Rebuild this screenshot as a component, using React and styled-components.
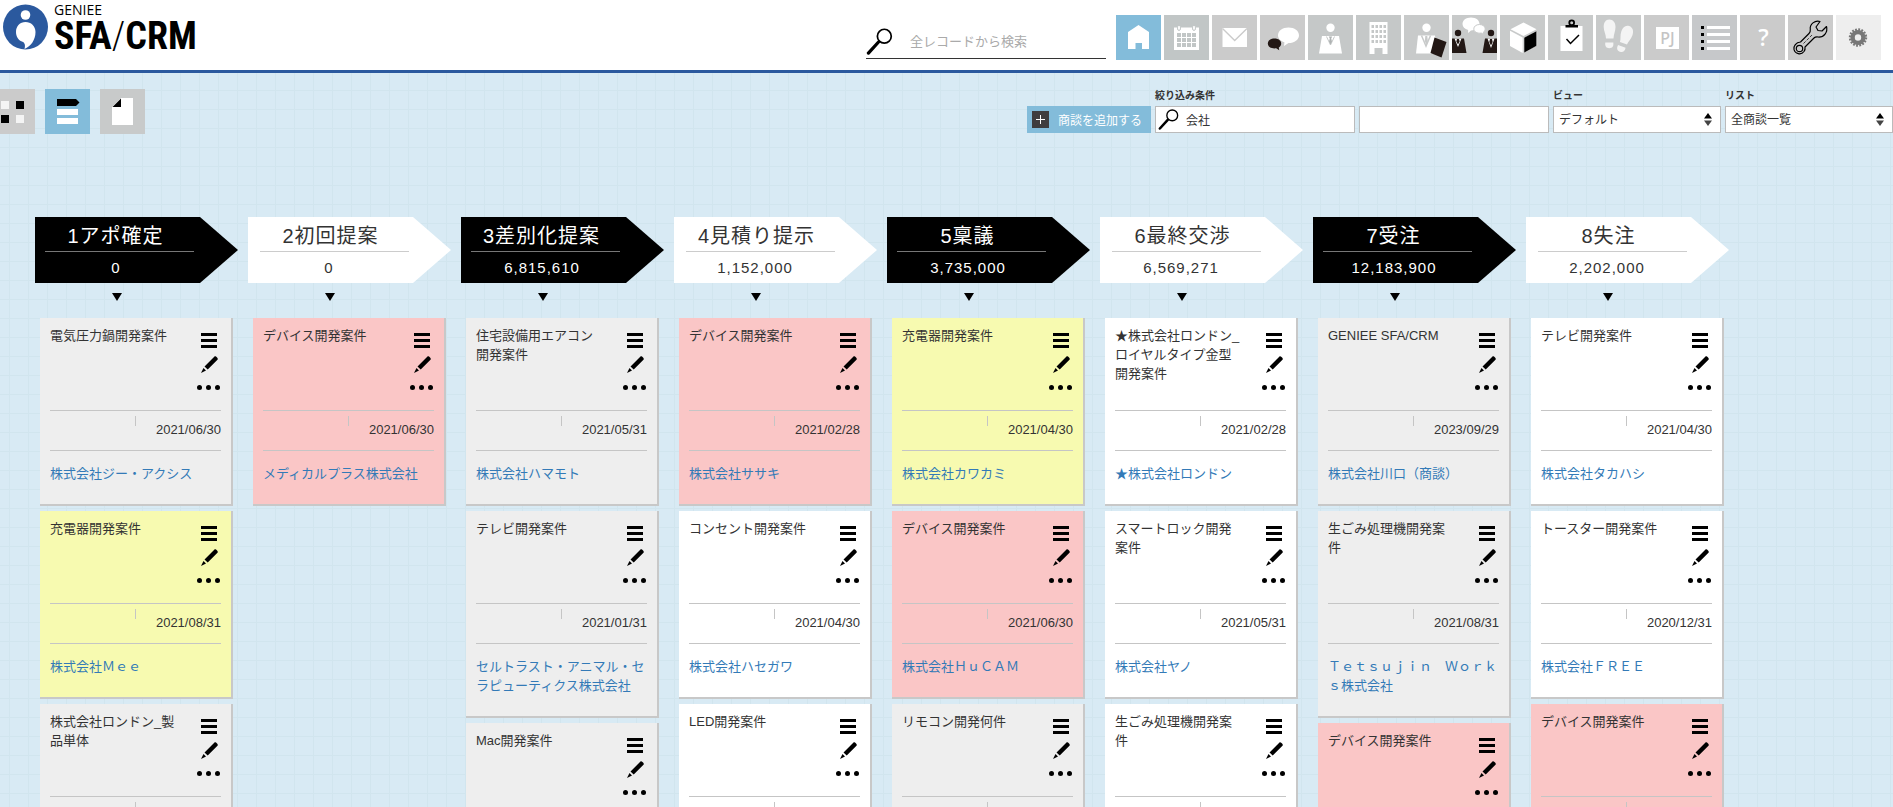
import React from 'react'
import styled, { createGlobalStyle } from 'styled-components';

const GlobalStyle = createGlobalStyle`
* {
  box-sizing: border-box;
}
body {
  margin: 0;
  font-family: "Liberation Sans", "Noto Sans CJK JP", sans-serif;
  font-size: 13px;
  line-height: 19px;
  color: #333;
}
button, input, select {
  font-family: inherit;
  color: inherit;
}
`

const stages = [
  {
    name: "1アポ確定", total: "0", cards: [
      { title: "電気圧力鍋開発案件", date: "2021/06/30", company: "株式会社ジー・アクシス", tone: "gray" },
      { title: "充電器開発案件", date: "2021/08/31", company: "株式会社Ｍｅｅ", tone: "yellow" },
      { title: "株式会社ロンドン_製品単体", date: "2021/08/31", company: "株式会社ロンドン", tone: "gray" },
    ]
  },
  {
    name: "2初回提案", total: "0", cards: [
      { title: "デバイス開発案件", date: "2021/06/30", company: "メディカルプラス株式会社", tone: "pink" },
    ]
  },
  {
    name: "3差別化提案", total: "6,815,610", cards: [
      { title: "住宅設備用エアコン開発案件", date: "2021/05/31", company: "株式会社ハマモト", tone: "gray" },
      { title: "テレビ開発案件", date: "2021/01/31", company: "セルトラスト・アニマル・セラピューティクス株式会社", tone: "gray" },
      { title: "Mac開発案件", date: "2021/03/31", company: "株式会社ハマモト", tone: "gray" },
    ]
  },
  {
    name: "4見積り提示", total: "1,152,000", cards: [
      { title: "デバイス開発案件", date: "2021/02/28", company: "株式会社ササキ", tone: "pink" },
      { title: "コンセント開発案件", date: "2021/04/30", company: "株式会社ハセガワ", tone: "white" },
      { title: "LED開発案件", date: "2021/04/30", company: "株式会社ササキ", tone: "white" },
    ]
  },
  {
    name: "5稟議", total: "3,735,000", cards: [
      { title: "充電器開発案件", date: "2021/04/30", company: "株式会社カワカミ", tone: "yellow" },
      { title: "デバイス開発案件", date: "2021/06/30", company: "株式会社ＨｕＣＡＭ", tone: "pink" },
      { title: "リモコン開発何件", date: "2021/06/30", company: "株式会社カワカミ", tone: "gray" },
    ]
  },
  {
    name: "6最終交渉", total: "6,569,271", cards: [
      { title: "★株式会社ロンドン_ロイヤルタイプ金型開発案件", date: "2021/02/28", company: "★株式会社ロンドン", tone: "white" },
      { title: "スマートロック開発案件", date: "2021/05/31", company: "株式会社ヤノ", tone: "white" },
      { title: "生ごみ処理機開発案件", date: "2021/05/31", company: "株式会社ヤノ", tone: "white" },
    ]
  },
  {
    name: "7受注", total: "12,183,900", cards: [
      { title: "GENIEE SFA/CRM", date: "2023/09/29", company: "株式会社川口（商談）", tone: "gray" },
      { title: "生ごみ処理機開発案件", date: "2021/08/31", company: "Ｔｅｔｓｕｊｉｎ　Ｗｏｒｋｓ株式会社", tone: "gray" },
      { title: "デバイス開発案件", date: "2021/08/31", company: "株式会社タカハシ", tone: "pink" },
    ]
  },
  {
    name: "8失注", total: "2,202,000", cards: [
      { title: "テレビ開発案件", date: "2021/04/30", company: "株式会社タカハシ", tone: "white" },
      { title: "トースター開発案件", date: "2020/12/31", company: "株式会社ＦＲＥＥ", tone: "white" },
      { title: "デバイス開発案件", date: "2020/12/31", company: "株式会社タカハシ", tone: "pink" },
    ]
  },
];

const tones = {
  gray: "#eeeeee",
  yellow: "#f7fab0",
  pink: "#fac6c6",
  white: "#ffffff"
};

const Page = styled.div`
  display: flex;
  flex-direction: column;
  height: 100vh;
  overflow: hidden;
  background-color: #d8eaf4;
  background-image:
    linear-gradient(to right, #d1e5ee 1px, transparent 1px),
    linear-gradient(to bottom, #d1e5ee 1px, transparent 1px);
  background-size: 19px 19px;
  background-position: 9px 14px;
`

/* header */
const Header = styled.header`
  display: flex;
  flex-shrink: 0;
  align-items: flex-start;
  height: 73px;
  padding-right: 12px;
  background: #fff;
  border-bottom: 3px solid #2b599e;
`
const Logo = styled.a`
  display: flex;
  gap: 6px;
  margin: 4px auto 0 3px;
  color: #000;
  text-decoration: none;
`
const LogoText = styled.span`
  display: flex;
  flex-direction: column;
`
const LogoSmall = styled.span`
  font: 14px/12px "Open Sans", sans-serif;
`
const LogoBig = styled.span`
  font: bold 38px/40px "Roboto Condensed", "Liberation Sans Narrow", "Liberation Sans", sans-serif;
`
const Slash = styled.span`
  font-weight: 300;
`
const Search = styled.label`
  display: flex;
  align-items: center;
  width: 240px;
  height: 35px;
  margin: 24px 10px 0 0;
  border-bottom: 1px solid #333;
  input {
    flex: 1;
    min-width: 0;
    margin-left: 17px;
    padding: 0;
    border: 0;
    outline: 0;
    background: none;
    font-size: 13px;
  }
  input::placeholder {
    color: #aaa;
  }
`
const Nav = styled.nav`
  display: flex;
  gap: 3px;
  padding-top: 15px;
`
const IconButton = styled.button`
  flex-shrink: 0;
  width: 45px;
  height: 45px;
  padding: 0;
  border: 0;
  background: ${p => p.$bg || "#c8caca"};
  cursor: pointer;
  svg {
    display: block;
  }
`

/* toolbar */
const Toolbar = styled.div`
  display: flex;
  flex-shrink: 0;
  justify-content: space-between;
  align-items: flex-start;
  padding-top: 16px;
`
const Views = styled.div`
  display: flex;
  gap: 10px;
  margin-left: -10px;
`
const Filters = styled.div`
  display: flex;
  align-items: flex-end;
  gap: 4px;
`
const AddButton = styled.button`
  display: flex;
  align-items: center;
  gap: 9px;
  width: 124px;
  height: 27px;
  padding: 0 5px;
  border: 0;
  background: #83bcda;
  color: #fff;
  font-size: 12px;
  white-space: nowrap;
  svg {
    flex-shrink: 0;
  }
`
const Field = styled.label`
  display: flex;
  flex-direction: column;
  width: ${p => p.$width};
  font-size: 10px;
  font-weight: bold;
  line-height: 14px;
`
const Box = styled.span`
  display: grid;
  grid-template-columns: ${p => p.$columns || "1fr"};
  align-items: center;
  height: 27px;
  margin-top: 3px;
  border: 1px solid #bbb;
  background: #fff;
  input, select {
    width: 100%;
    min-width: 0;
    height: 25px;
    padding: 0 5px;
    border: 0;
    outline: 0;
    background: none;
    font-size: 12px;
    appearance: none;
  }
  select {
    grid-row: 1;
    grid-column: 1 / 3;
  }
  > svg {
    margin-left: 2px;
  }
`
const Spinner = styled.svg`
  grid-row: 1;
  grid-column: 2;
  pointer-events: none;
`

/* board */
const Board = styled.main`
  display: flex;
  flex: 1;
  min-height: 0;
  margin-top: 83px;
  padding-left: 35px;
  overflow: auto;
  scrollbar-width: none;
`
const Column = styled.section`
  flex: 0 0 213px;
`
const StageHead = styled.header`
  width: 203px;
  height: 66px;
  padding: 5px 41px 0 0;
  clip-path: polygon(0 0, 165px 0, 100% 50%, 165px 100%, 0 100%);
  background: ${p => p.$dark ? "#000" : "#fff"};
  color: ${p => p.$dark ? "#fff" : "#333"};
  text-align: center;
  letter-spacing: 1px;
`
const StageName = styled.h2`
  margin: 0 ${p => p.$dark ? "3px 0 10px" : "1px 0 12px"};
  padding: 0 8px 1px 0;
  border-bottom: 1px solid ${p => p.$dark ? "#777" : "#ccc"};
  font-size: 20px;
  font-weight: normal;
  line-height: 28px;
`
const StageTotal = styled.p`
  margin: 5px 0 0;
  font-size: 15px;
  line-height: 22px;
`
const Arrow = styled.div`
  width: 0;
  margin: 10px 0 17px 77px;
  border: 5px solid transparent;
  border-top: 8px solid #000;
  border-bottom: 0;
`
const Card = styled.article`
  width: 193px;
  margin: 0 0 5px 5px;
  padding: 0 10px;
  border: solid #c8c8c8;
  border-width: 0 2px 2px 0;
  background: ${p => tones[p.$tone]};
`
const CardTop = styled.div`
  display: flex;
  justify-content: space-between;
  height: 92px;
`
const CardTitle = styled.h3`
  width: 128px;
  margin: 8px 0 0;
  font-size: 13px;
  font-weight: normal;
  line-height: 19px;
`
const Actions = styled.div`
  display: flex;
  flex-direction: column;
  align-items: flex-end;
  padding-top: 13px;
  button {
    width: 24px;
    height: 23px;
    padding: 0;
    border: 0;
    background: none;
    cursor: pointer;
  }
  svg {
    display: block;
  }
`
const DateRow = styled.div`
  display: flex;
  justify-content: space-between;
  height: 41px;
  border: solid #c5c5c5;
  border-width: 1px 0;
  padding-top: 5px;
`
const Tick = styled.span`
  width: 1px;
  height: 10px;
  margin-left: 85px;
  background: #c5c5c5;
`
const DueDate = styled.time`
  padding-top: 4px;
`
const Company = styled.a`
  display: block;
  padding: 13px 0 21px;
  color: #337ab7;
  text-decoration: none;
`

const Icon = ({ children, size = 45 }) =>
  <svg width={size} height={size} viewBox={`0 0 ${size} ${size}`} aria-hidden="true">{children}</svg>;

const Magnifier = ({ size }) =>
  <svg width={size} height={size} viewBox="0 0 27 28" aria-hidden="true">
    <circle cx="18.5" cy="8.5" r="7.2" fill="#fff" stroke="#000" strokeWidth="1.8" />
    <path d="M2 26 L12.5 14.5" stroke="#000" strokeWidth="3.4" strokeLinecap="round" />
  </svg>;

const windows = [0, 1, 2, 3].flatMap(r => [0, 1, 2, 3].map(c => [16 + c * 4, 10 + r * 5]));
const days = [0, 1, 2].flatMap(r => [0, 1, 2, 3].map(c => [12 + c * 5, 18 + r * 5]));

const navItems = [
  {
    label: "ホーム", bg: "#83bcda",
    icon: <path d="M12 17 L22.5 10 L33 17 V34 H26 V28 H19.5 V34 H12 Z" fill="#fff" />
  },
  {
    label: "カレンダー", bg: "#c1c6c6",
    icon: <>
      <path d="M10 12.5 H35 V35 H10 Z" fill="#fff" />
      {days.map(([x, y]) => <rect key={x + "-" + y} x={x + 1} y={y} width="4" height="4" fill="#c1c6c6" />)}
      <rect x="13.6" y="10.4" width="2.8" height="5" rx="1.4" fill="#fff" stroke="#c1c6c6" />
      <rect x="28.6" y="10.4" width="2.8" height="5" rx="1.4" fill="#fff" stroke="#c1c6c6" />
    </>
  },
  {
    label: "メール", bg: "#cbcbcb",
    icon: <>
      <rect x="10.5" y="13" width="24.5" height="19" fill="#fff" />
      <path d="M10.5 13.5 L22.7 25.5 L35 13.5" fill="none" stroke="#cbcbcb" strokeWidth="1.4" />
    </>
  },
  {
    label: "チャット", bg: "#cbcbcb",
    icon: <>
      <path d="M28.5 12.5 c6 0 10.5 3.3 10.5 7.8 s-4.5 7.8 -10.5 7.8 l-4.5 3 .4 -3.9 c-4 -1 -6.4 -3.8 -6.4 -6.9 c0 -4.5 4.5 -7.8 10.5 -7.8 z" fill="#fff" />
      <path d="M14.5 23.5 c4 0 6.7 2.2 6.7 5 c0 1.8 -.9 3.2 -2.4 4 l.4 2.7 l-3 -1.9 c-5 .7 -8.4 -1.6 -8.4 -4.8 c0 -2.8 2.7 -5 6.7 -5 z" fill="#231815" />
    </>
  },
  {
    label: "担当者", bg: "#c5c8c8",
    icon: <>
      <circle cx="22.5" cy="12.8" r="4.2" fill="#fff" />
      <path d="M14 21 H31 L34 38.5 H11 Z" fill="#fff" />
      <path d="M18.5 21.5 L22.5 30 L26.5 21.5" fill="none" stroke="#c5c8c8" />
      <path d="M20.8 21.5 h3.4 l-1 2 l.8 3 l-1.5 3 l-1.500 -3 l.8 -3 z" fill="#aeb2b2" />
    </>
  },
  {
    label: "会社", bg: "#c5c8c8",
    icon: <>
      <rect x="13.5" y="7" width="18" height="32" fill="#fff" />
      {windows.map(([x, y]) => <rect key={x + "-" + y} x={x - .5} y={y} width="2.5" height="3" fill="#c5c8c8" />)}
      <rect x="18.5" y="33" width="8" height="6" fill="#c5c8c8" />
    </>
  },
  {
    label: "商談",
    icon: <>
      <circle cx="22.5" cy="12.7" r="4.2" fill="#fff" />
      <path d="M14 20.5 H31 L33.5 38.5 H12 Z" fill="#fff" />
      <path d="M17.5 20.5 L22 31 L26.5 20.5" fill="none" stroke="#c8caca" strokeWidth="1.5" />
      <path d="M21.3 21 h2 l.5 5 l-1.5 4 l-1.5 -4 z" fill="#c8caca" />
      <path d="M30.5 22.5 L42.5 27 L37.5 42.5 L26.5 38 Z" fill="#231815" />
    </>
  },
  {
    label: "商談履歴",
    icon: <>
      <path d="M19 2.5 c5 0 8.5 2.8 8.5 6.5 s-3.5 6.5 -8.5 6.5 l-3 2.5 l.2 -3 c-3.5 -1 -5.7 -3.3 -5.7 -6 c0 -3.7 3.5 -6.5 8.5 -6.5 z" fill="#fff" />
      <path d="M27.5 9.5 c3.3 0 5.7 1.9 5.7 4.4 c0 1.6 -.8 2.7 -1.9 3.4 l.5 2.2 l-2.5 -1.4 c-4.5 .5 -7.5 -1.5 -7.5 -4.2 c0 -2.5 2.4 -4.4 5.7 -4.4 z" fill="#fff" stroke="#c8caca" />
      <circle cx="6" cy="18" r="3.2" fill="#231815" />
      <circle cx="39" cy="18" r="3.2" fill="#231815" />
      <path d="M0 23.5 H12 L14.5 38 H0 Z M33 23.5 H45 V38 H30.5 Z" fill="#231815" />
      <path d="M2.5 23.5 h7 l-3.5 8.5 z M35.5 23.5 h7 l-3.5 9.5 z" fill="#fff" />
      <path d="M5 24 h2 l.7 2.5 l-1.7 3 l-1.7 -3 z M38 24 h2 l.7 3 l-1.7 3.5 l-1.7 -3.5 z" fill="#231815" />
    </>
  },
  {
    label: "商品",
    icon: <>
      <path d="M23.5 7.5 L36.5 14.3 L23.5 21 L10.5 14.3 Z M10 15.8 L22.7 22.5 V38 L10 31 Z" fill="#fff" />
      <path d="M24 22.5 L36.7 15.8 V31 L24 38 Z" fill="#000" stroke="#fff" strokeWidth=".5" />
    </>
  },
  {
    label: "タスク",
    icon: <>
      <rect x="12.5" y="11" width="22" height="25" fill="#fff" />
      <path d="M17.5 10 H30 V12.5 H17.5 Z" fill="#000" />
      <circle cx="23.7" cy="7.7" r="2.4" fill="none" stroke="#000" strokeWidth="1.8" />
      <path d="M18.5 24 L22.5 28.5 L31 20" fill="none" stroke="#000" strokeWidth="1.5" />
    </>
  },
  {
    label: "足跡",
    icon: <g fill="#f4f4f4">
      <path d="M13.3 4.5 c4 0 6.2 3.3 6.2 7.5 c0 4.5 -1.8 7 -2 11.5 h-7.5 c0 -4.5 -2.3 -7 -2.3 -11.5 c0 -4.2 1.8 -7.5 5.6 -7.5 z" />
      <path d="M9.3 27.5 h8 c.5 3.8 -1 5.7 -4 5.7 s-4.5 -1.9 -4 -5.7 z" />
      <g transform="translate(17 9) rotate(20 13 10)">
        <path d="M13.3 1.5 c4 0 6.2 3.3 6.2 7.5 c0 4.5 -1.8 7 -2 10.5 h-7.5 c0 -3.5 -2.3 -6 -2.3 -10.5 c0 -4.2 1.8 -7.5 5.6 -7.5 z" />
        <path d="M9.3 23 h8 c.5 3.8 -1 5.7 -4 5.7 s-4.5 -1.9 -4 -5.7 z" />
      </g>
    </g>
  },
  {
    label: "プロジェクト", bg: "#cbcbcb",
    icon: <>
      <rect x="12" y="12" width="23" height="22" fill="#fff" />
      <text x="23.5" y="29" textAnchor="middle" fontFamily="Noto Sans, sans-serif" fontSize="16" fontWeight="500" fill="#c4c4c4">PJ</text>
    </>
  },
  {
    label: "リスト", bg: "#c6c8ca",
    icon: <>
      <path d="M9 11 h3 v3 h-3 z M9 18 h3 v3 h-3 z M9 25 h3 v3 h-3 z M9 32 h3 v3 h-3 z" fill="#000" />
      <path d="M15 11 h23 v3 h-23 z M15 18 h23 v3 h-23 z M15 25 h23 v3 h-23 z M15 32 h23 v3 h-23 z" fill="#fff" />
    </>
  },
  {
    label: "ヘルプ", bg: "#cbcbcb",
    icon: <text x="23.5" y="31" textAnchor="middle" fontFamily="Open Sans, sans-serif" fontWeight="600" fontSize="23" fill="#fff">?</text>
  },
  {
    label: "ツール", bg: "#cbcbcb",
    icon: <g fill="none" stroke="#000" strokeWidth="1.2" strokeLinejoin="round">
      <path d="M32 6.5 C27 5 21.5 9 22.3 14.5 C22.5 16.5 22 17.5 21 18.5 L12.5 27 C8 27.2 5.3 31 6 34.5 C7 39 13 40.5 16 36.5 C17 35 17.3 33.5 17 32 L26 23 C27 22 28 21.8 30 22 C36 22.6 40 17 38.5 11.5 L34 16 L30 15.5 L28 12 Z" />
      <circle cx="11.5" cy="33.5" r="3.2" />
      <path d="M15.5 28.5 L24 20" strokeWidth=".7" strokeDasharray="3 1.5" />
    </g>
  },
  {
    label: "設定", bg: "#eee",
    icon: <>
      <circle cx="22" cy="22.5" r="8" fill="none" stroke="#777" strokeWidth="2.4" strokeDasharray="1.8 1.342" />
      <circle cx="22" cy="22.5" r="5.4" fill="none" stroke="#777" strokeWidth="4.4" />
    </>
  },
];

const viewItems = [
  {
    label: "グリッド表示", bg: "#cbcbcb",
    icon: <>
      <path d="M11 12 h8 v8 h-8 z M26 26 h8 v8 h-8 z" fill="#f4f4f4" />
      <path d="M26 12 h8 v8 h-8 z M11 26 h8 v8 h-8 z" fill="#000" />
    </>
  },
  {
    label: "パイプライン表示", bg: "#83bcda",
    icon: <>
      <path d="M12 10 H31 L34.5 13.5 L31 17 H12 Z" fill="#000" />
      <path d="M12 20 h21 v6 h-21 z M12 29 h21 v6 h-21 z" fill="#fff" />
    </>
  },
  {
    label: "帳票表示", bg: "#c8caca",
    icon: <>
      <path d="M21 9 H33 V36 H12 V18 Z" fill="#fff" />
      <path d="M12.5 18 L21 9.5 V18 Z" fill="#000" />
    </>
  },
];

const SelectField = ({ label, value, width }) =>
  <Field $width={width}>
    {label}
    <Box $columns="1fr 18px">
      <select defaultValue={value}>
        <option>{value}</option>
      </select>
      <Spinner width="8" height="13" viewBox="0 0 8 13" aria-hidden="true">
        <path d="M0 5.5 L4 0 L8 5.5 Z" fill="#000" />
        <path d="M0 7.5 L4 13 L8 7.5 Z" fill="#444" />
      </Spinner>
    </Box>
  </Field>;

const DealCard = ({ deal }) =>
  <Card $tone={deal.tone}>
    <CardTop>
      <CardTitle>{deal.title}</CardTitle>
      <Actions>
        <button aria-label="詳細">
          <Icon size={23}><path d="M4 2 h16 v3 h-16 z M4 8 h16 v3 h-16 z M4 14 h16 v3 h-16 z" fill="#000" /></Icon>
        </button>
        <button aria-label="編集">
          <Icon size={23}>
            <path d="M7.5 12.5 L17.5 2.5 C18.5 1.7 21.5 4.3 20.7 5.5 L10.7 15.5 Z M6.5 14 L9 16.5 L4 19 Z" fill="#000" />
          </Icon>
        </button>
        <button aria-label="その他">
          <Icon size={23}>
            <circle cx="2.5" cy="10.5" r="2.5" /><circle cx="11.5" cy="10.5" r="2.5" /><circle cx="20.5" cy="10.5" r="2.5" />
          </Icon>
        </button>
      </Actions>
    </CardTop>
    <DateRow>
      <Tick />
      <DueDate>{deal.date}</DueDate>
    </DateRow>
    <Company href="#">{deal.company}</Company>
  </Card>;

const App = () => {
  return (
    <Page>
      <GlobalStyle />
      <Header>
        <Logo href="#">
          <svg width="45" height="46" viewBox="0 0 45 46" aria-hidden="true">
            <circle cx="22.5" cy="23" r="22.5" fill="#2b599e" />
            <circle cx="22.5" cy="11" r="4.8" fill="#fff" />
            <path d="M22.5 18 C28 18 32.5 22 32.5 28 C32.5 36 28 42 21.5 45 C22.5 41.5 22 38.5 19 37.5 C15.5 36.3 13 32.5 13 28 C13 22 17 18 22.5 18 Z" fill="#fff" />
          </svg>
          <LogoText>
            <LogoSmall>GENIEE</LogoSmall>
            <LogoBig>SFA<Slash>/</Slash>CRM</LogoBig>
          </LogoText>
        </Logo>
        <Search>
          <Magnifier size={27} />
          <input type="text" placeholder="全レコードから検索" aria-label="全レコードから検索" />
        </Search>
        <Nav>
          {navItems.map(item =>
            <IconButton key={item.label} $bg={item.bg} aria-label={item.label}>
              <Icon>{item.icon}</Icon>
            </IconButton>)}
        </Nav>
      </Header>

      <Toolbar>
        <Views>
          {viewItems.map(item =>
            <IconButton key={item.label} $bg={item.bg} aria-label={item.label}>
              <Icon>{item.icon}</Icon>
            </IconButton>)}
        </Views>
        <Filters>
          <AddButton>
            <svg width="17" height="17" viewBox="0 0 17 17" aria-hidden="true">
              <rect width="17" height="17" fill="#3f3d3e" />
              <path d="M8.5 4 V13 M4 8.5 H13" stroke="#fff" />
            </svg>
            商談を追加する
          </AddButton>
          <Field $width="200px">
            絞り込み条件
            <Box $columns="25px 1fr">
              <Magnifier size={21} />
              <input type="text" defaultValue="会社" />
            </Box>
          </Field>
          <Field $width="190px">
            <Box><input type="text" aria-label="絞り込みの値" /></Box>
          </Field>
          <SelectField label="ビュー" value="デフォルト" width="168px" />
          <SelectField label="リスト" value="全商談一覧" width="168px" />
        </Filters>
      </Toolbar>

      <Board>
        {stages.map((stage, i) =>
          <Column key={stage.name}>
            {/* every other stage is drawn in black */}
            <StageHead $dark={i % 2 === 0}>
              <StageName $dark={i % 2 === 0}>{stage.name}</StageName>
              <StageTotal>{stage.total}</StageTotal>
            </StageHead>
            <Arrow />
            {stage.cards.map((deal, j) => <DealCard key={j} deal={deal} />)}
          </Column>)}
      </Board>
    </Page>
  )
}

export default App
